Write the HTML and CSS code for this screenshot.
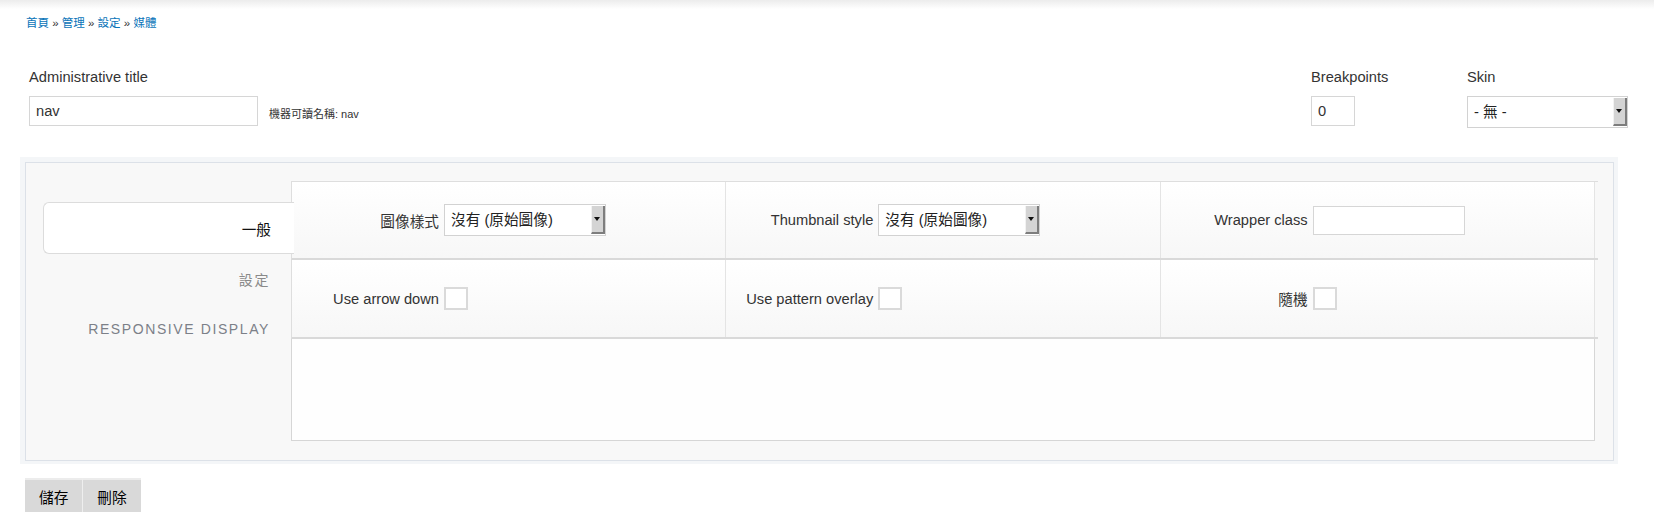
FILE: index.html
```html
<!DOCTYPE html>
<html lang="zh-Hant">
<head>
<meta charset="utf-8">
<title>媒體</title>
<link rel="stylesheet" href="styles.css">
</head>
<body>
<nav class="breadcrumb"><a href="#">首頁</a> » <a href="#">管理</a> » <a href="#">設定</a> » <a href="#">媒體</a></nav>

<div class="top-row">
  <div class="field field-title">
    <label class="field-label">Administrative title</label>
    <div class="field-line">
      <input class="text-input title-input" type="text" value="nav">
      <span class="machine">機器可讀名稱: nav</span>
    </div>
  </div>
  <div class="field field-bp">
    <label class="field-label">Breakpoints</label>
    <input class="text-input bp-input" type="text" value="0">
  </div>
  <div class="field field-skin">
    <label class="field-label">Skin</label>
    <span class="select-wrap skin-select">
      <select class="select"><option>- 無 -</option></select>
      <span class="select-btn"></span>
    </span>
  </div>
</div>

<div class="panel">
  <div class="panel-inner">
    <ul class="tabs">
      <li class="tab tab-active">一般</li>
      <li class="tab">設定</li>
      <li class="tab tab-upper">Responsive display</li>
    </ul>
    <div class="content">
      <div class="row row-first">
        <div class="cell">
          <label class="cell-label">圖像樣式</label>
          <span class="select-wrap cell-select">
            <select class="select"><option>沒有 (原始圖像)</option></select>
            <span class="select-btn"></span>
          </span>
        </div>
        <div class="cell">
          <label class="cell-label">Thumbnail style</label>
          <span class="select-wrap cell-select">
            <select class="select"><option>沒有 (原始圖像)</option></select>
            <span class="select-btn"></span>
          </span>
        </div>
        <div class="cell">
          <label class="cell-label">Wrapper class</label>
          <input class="text-input wrapper-input" type="text">
        </div>
      </div>
      <div class="row">
        <div class="cell">
          <label class="cell-label">Use arrow down</label>
          <input class="check" type="checkbox">
        </div>
        <div class="cell">
          <label class="cell-label">Use pattern overlay</label>
          <input class="check" type="checkbox">
        </div>
        <div class="cell">
          <label class="cell-label">隨機</label>
          <input class="check" type="checkbox">
        </div>
      </div>
      <div class="empty-box"></div>
    </div>
  </div>
</div>

<div class="actions">
  <button class="btn" type="button">儲存</button>
  <button class="btn btn-second" type="button">刪除</button>
</div>
</body>
</html>
```
FILE: styles.css
```css
* { box-sizing: border-box; }

html, body { margin: 0; padding: 0; }

body {
  font-family: "Liberation Sans", Arial, "Noto Sans CJK TC", sans-serif;
  font-size: 14.67px;
  color: #333;
  background: #fff linear-gradient(#ececec, #ffffff 9px) no-repeat;
  background-size: 100% 12px;
}

.breadcrumb {
  padding: 16px 0 0 26px;
  font-size: 11.5px;
  line-height: 14px;
  color: #333;
}
.breadcrumb a {
  color: #0a74b9;
  text-decoration: none;
}

/* top row */
.top-row {
  display: flex;
  padding: 0 26px 0 29px;
  margin-top: 39px;
}
.field { display: flex; flex-direction: column; }
.field-title { margin-right: auto; }
.field-bp { width: 156px; }
.field-skin { width: 161px; }

.field-label {
  font-size: 14.67px;
  line-height: 17px;
  color: #333;
  margin-bottom: 10px;
}
.field-line { display: flex; }

.text-input {
  font-family: inherit;
  font-size: 14.67px;
  color: #333;
  height: 30px;
  border: 1px solid #d6d6d6;
  background: #fff;
  padding: 0 6px;
  margin: 0;
  outline: none;
}
.title-input { width: 229px; }
.bp-input { width: 44px; }
.wrapper-input { width: 152px; height: 29px; }

.machine {
  align-self: flex-end;
  margin: 0 0 5px 11px;
  font-size: 11px;
  line-height: 13px;
  color: #333;
}

/* select */
.select-wrap {
  position: relative;
  display: inline-block;
}
.select {
  -webkit-appearance: none;
  appearance: none;
  font-family: inherit;
  font-size: 14.67px;
  color: #222;
  background: #fff;
  border: 1px solid #d2d2d2;
  border-radius: 0;
  padding: 0 20px 0 6px;
  margin: 0;
  display: block;
  outline: none;
}
.skin-select .select { width: 161px; height: 32px; }
.cell-select .select { width: 162px; height: 32px; }

.select-btn {
  position: absolute;
  top: 2px;
  right: 1px;
  bottom: 2px;
  width: 14px;
  background: #d4d4d4;
  border-left: 1px solid #f2f2f2;
  border-right: 2px solid #7d7d7d;
  border-bottom: 2px solid #7d7d7d;
}
.select-btn::after {
  content: "";
  position: absolute;
  left: 2px;
  top: 50%;
  margin-top: -2px;
  border-top: 4px solid #111;
  border-left: 3.5px solid transparent;
  border-right: 3.5px solid transparent;
}

/* panel */
.panel {
  margin: 29px 36px 0 20px;
  padding: 5px 4px 3px 5px;
  background: #f4f6f8;
}
.panel-inner {
  display: flex;
  align-items: flex-start;
  border: 1px solid #dce1e8;
  background: #f8f8f8;
  padding: 18px 18px 19px 0;
}

.tabs {
  list-style: none;
  margin: 21px 0 0 0;
  padding: 0 0 0 17px;
  width: 265px;
  flex: none;
}
.tab {
  position: relative;
  z-index: 1;
  width: 251px;
  height: 50px;
  padding-right: 24px;
  display: flex;
  align-items: center;
  justify-content: flex-end;
  font-size: 14px;
  letter-spacing: 1.6px;
  color: #8a8a8a;
}
.tab-active {
  height: 52px;
  background: #fff;
  border: 1px solid #dcdcdc;
  border-right: none;
  border-radius: 6px 0 0 6px;
  font-size: 14.67px;
  letter-spacing: 0;
  color: #111;
  padding-right: 23px;
}
.tab-upper {
  text-transform: uppercase;
  color: #7c8088;
}

/* content grid */
.content {
  flex: 1;
  width: 1304px;
}
.row {
  display: grid;
  grid-template-columns: repeat(3, 1fr);
  border-left: 1px solid #dedede;
  border-bottom: 2px solid #d9d9d9;
  margin-right: -3px;
  padding-right: 3px;
}
.row-first {
  border-top: 1px solid #dedede;
}
.row .cell { height: 77px; }
.row-first .cell { height: 76px; }

.cell {
  display: flex;
  align-items: center;
  background: linear-gradient(#ffffff, #f7f7f7);
  border-right: 1px solid #e4e4e4;
}
.cell-label {
  width: 147px;
  flex: none;
  text-align: right;
  margin-right: 5px;
  font-size: 14.67px;
  color: #333;
}

.check {
  -webkit-appearance: none;
  appearance: none;
  width: 24px;
  height: 23px;
  margin: 0;
  border: 2px solid #dadada;
  background: #fff;
  border-radius: 0;
}

.empty-box {
  height: 102px;
  background: #fefefe;
  border: 1px solid #d6d6d6;
  border-top: none;
}

/* actions */
.actions {
  display: flex;
  margin: 14px 0 0 25px;
}
.btn {
  font-family: inherit;
  font-size: 14.67px;
  color: #000;
  height: 34px;
  padding: 0 14px;
  margin: 0;
  background: #d9d9d9;
  border: none;
  border-top: 2px solid #ececec;
  border-radius: 0;
}
.btn-second {
  border-left: 1px solid #eeeeee;
}
```
